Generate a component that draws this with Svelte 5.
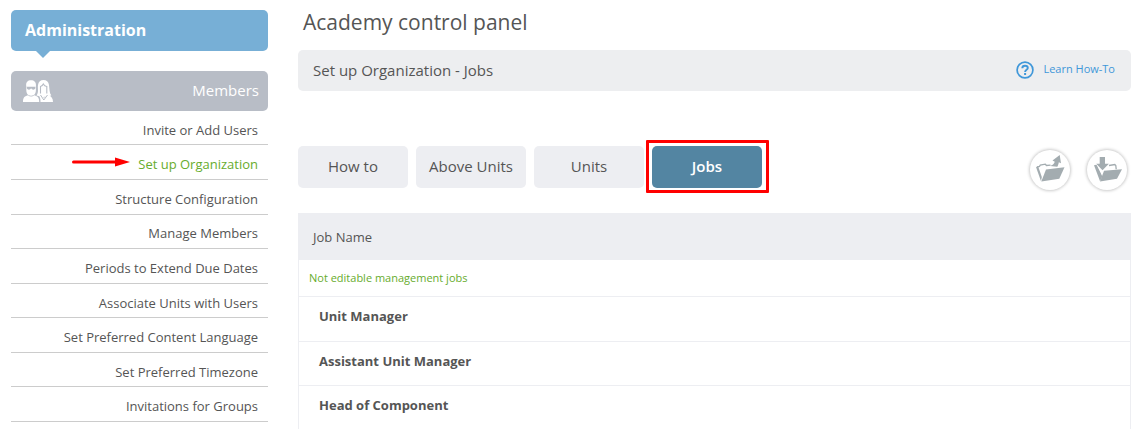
<script>
    const menuItems = [
        'Invite or Add Users',
        'Set up Organization',
        'Structure Configuration',
        'Manage Members',
        'Periods to Extend Due Dates',
        'Associate Units with Users',
        'Set Preferred Content Language',
        'Set Preferred Timezone',
        'Invitations for Groups',
    ];
    const tabs = ['How to', 'Above Units', 'Units', 'Jobs'];
    const jobs = ['Unit Manager', 'Assistant Unit Manager', 'Head of Component'];

    let activeItem = $state('Set up Organization');
    let activeTab = $state('Jobs');
</script>

<div class="page">
    <aside>
        <div class="admin">Administration</div>
        <div class="members">
            <svg width="32" height="24" viewBox="0 0 32 24" fill="#fff">
                <path d="M4.300 7.500C3.500 3 6 1.300 9 1.300S14.500 3 13.900 7.500V11c0 3.500-1.500 5.700-4.800 5.700S4.300 14.500 4.300 11z" />
                <path d="M1 23c0-4 1-5.500 5-6.700 1.700 1.700 4.500 1.700 6.200 0 4 1.200 5 2.700 5 6.700z" />
                <path d="M4.800 7.800h8.600v1.500c-.7 1.700-3.300 1.900-4.300 0-1 1.900-3.600 1.700-4.300 0z" fill="#b8bdc6" />
                <path d="M14.500 16.500c2.500-3 1-7 1.500-10.500C16.500 2.700 18.500 1 21.500 1s5 1.700 5.500 5c.5 3.800.2 7.500 2.300 10.500l-2.500.5-5.300 1-5-1z" />
                <path d="M18.500 14.500V7.500c1.500-.5 2.300-1.200 2.800-2.500.8 1.500 2 2.300 3.500 2.500v7" fill="none" stroke="#b8bdc6" stroke-width="1.100" />
                <path d="M17 16.500l2.500-1 2.500 3.500 3-3.500c4 1 6 3.500 6 7.500H18.500c0-3-.3-4.500-1.500-6.500z" />
                <path d="M18.500 16l3.300 5 3.700-5" fill="none" stroke="#b8bdc6" />
            </svg>
            <span>Members</span>
        </div>
        <nav>
            {#each menuItems as item}
                <button class="item" class:active={item === activeItem} onclick={() => (activeItem = item)}>
                    {#if item === activeItem}
                        <svg class="arrow" width="60" height="10" viewBox="0 0 60 10">
                            <path d="M2.500 5H46" stroke="#f00" stroke-width="3" stroke-linecap="round" />
                            <path d="M44 .5L59 5 44 9.500z" fill="#f00" />
                        </svg>
                    {/if}
                    <span>{item}</span>
                </button>
            {/each}
        </nav>
    </aside>

    <main>
        <h1>Academy control panel</h1>
        <div class="bar">
            <span>Set up Organization - Jobs</span>
            <a href="#help">
                <svg width="18" height="18" viewBox="0 0 18 18" fill="none" stroke="#3f97d9">
                    <circle cx="9" cy="9" r="7.900" stroke-width="1.700" />
                    <path d="M6.300 7.300C6.300 5.500 7.400 4.800 9 4.800s2.800.9 2.800 2.200c0 1.700-2.700 1.900-2.700 3.900" stroke-width="1.900" />
                    <path d="M9.100 12v2" stroke-width="2" />
                </svg>
                <span>Learn How-To</span>
            </a>
        </div>

        <div class="toolbar">
            <div class="tabs">
                {#each tabs as tab}
                    <button class="tab" class:selected={tab === activeTab} onclick={() => (activeTab = tab)}>{tab}</button>
                {/each}
            </div>
            <div class="actions">
                <button class="round" aria-label="Export">
                    <svg width="40" height="40" viewBox="0 0 40 40" fill="#a3acb0">
                        <path d="M16 19.500L34.500 17.300 29.300 28.700 11.300 31.500z" />
                        <path d="M6 17l2.200-.4 3.600 10.400L11 31.300z" />
                        <path d="M7 17l2.500-.6.800-1.400 5-.8 1.200 1.300 4-.4" fill="none" stroke="#a3acb0" stroke-width="1.300" />
                        <path d="M20 16c2.500-.8 4-2 4.800-4.200L22.500 10.500 29.700 5l1.300 8.300-2.200-1c-.2 1.800-.7 3-1.500 4.500z" />
                    </svg>
                </button>
                <button class="round" aria-label="Import">
                    <svg width="40" height="40" viewBox="0 0 40 40" fill="#a3acb0">
                        <path d="M17 20.700l18-1.500-5 9.600-17 2.700z" />
                        <path d="M7 15.200l2.200-.5 6.200 11.800L13 31.300z" />
                        <path d="M9.200 15.200l4.300 9" fill="none" stroke="#a3acb0" />
                        <path d="M22 15.500l5.800-1 1 1 .4 3.800" fill="none" stroke="#a3acb0" stroke-width="1.300" />
                        <path d="M12.700 7H18v6.700h3.900l-6.400 6.600-6.300-6.600h3.500z" />
                    </svg>
                </button>
            </div>
        </div>

        <div class="table">
            <div class="head">Job Name</div>
            <div class="note">Not editable management jobs</div>
            {#each jobs as job}
                <div class="row">{job}</div>
            {/each}
        </div>
    </main>
</div>

<style>
    :global(body) {
        background: #fff;
        overflow: hidden;
    }

    .page {
        display: flex;
        gap: 30px;
        box-sizing: border-box;
        height: 429px;
        padding: 10px 13px 0 11px;
        overflow: hidden;
        font-family: "Open Sans", sans-serif;
        color: #555;
    }

    button {
        padding: 0;
        border: none;
        background: none;
        font-family: inherit;
        color: inherit;
        cursor: pointer;
    }

    aside {
        width: 257px;
        flex: none;
    }

    .admin {
        position: relative;
        height: 41px;
        padding-left: 14px;
        border-radius: 5px;
        background: #77afd6;
        color: #fff;
        font-size: 16px;
        font-weight: 700;
        line-height: 40px;
    }

    /* pointer under the heading */
    .admin::after {
        content: '';
        position: absolute;
        left: 25px;
        top: 41px;
        border: 7px solid transparent;
        border-top-color: #77afd6;
        border-bottom: 0;
    }

    .members {
        display: flex;
        align-items: center;
        justify-content: space-between;
        box-sizing: border-box;
        height: 40px;
        margin-top: 20px;
        padding: 0 9px 0 11px;
        border-radius: 5px;
        background: #b8bdc6;
        color: #fff;
        font-size: 15px;
    }

    .members span {
        padding-bottom: 2px;
    }

    nav {
        display: flex;
        flex-direction: column;
        margin-top: -0.1px;
    }

    .item {
        display: flex;
        align-items: center;
        justify-content: flex-end;
        gap: 7px;
        box-sizing: border-box;
        height: 34.56px;
        padding: 4.2px 10px 0 0;
        border-bottom: 1px solid #ccc;
        font-size: 13px;
        line-height: 18px;
    }

    .item.active {
        color: #67ac2d;
    }

    .arrow {
        margin-top: -5px;
    }

    main {
        flex: 1;
        min-width: 0;
    }

    h1 {
        height: 40px;
        margin: 0 0 0 5px;
        font-size: 21px;
        font-weight: 400;
        line-height: 25px;
    }

    .bar {
        display: flex;
        align-items: center;
        justify-content: space-between;
        box-sizing: border-box;
        height: 41px;
        padding: 0 16px 1px 15px;
        border-radius: 5px;
        background: #edeef0;
        font-size: 15px;
    }

    .bar a {
        display: flex;
        gap: 9px;
        color: #3f97d9;
        font-size: 11px;
        line-height: 16px;
        text-decoration: none;
    }

    .toolbar {
        display: flex;
        justify-content: space-between;
        margin-top: 55px;
    }

    .tabs {
        display: flex;
        gap: 8px;
    }

    .tab {
        width: 110px;
        height: 42px;
        padding-bottom: 2px;
        border-radius: 5px;
        background: #edeef2;
        font-size: 15px;
    }

    .tab.selected {
        position: relative;
        background: #5385a2;
        color: #fff;
        font-weight: 600;
    }

    /* highlight frame around the selected tab */
    .tab.selected::after {
        content: '';
        position: absolute;
        inset: -6px -7px -5px -6px;
        border: 3px solid #f00;
        border-radius: 1px;
    }

    .actions {
        display: flex;
        gap: 17px;
        padding: 4px 4px 0 0;
    }

    .round {
        width: 40px;
        height: 40px;
        border-radius: 50%;
        background: #fff;
        box-shadow: 0 0 3px 1px #ccc;
    }

    .round svg {
        display: block;
    }

    .table {
        box-sizing: border-box;
        height: 260px;
        margin-top: 23px;
        border: 1px solid #edeef2;
        border-top: 0;
    }

    .head {
        height: 47px;
        padding-left: 14px;
        background: #edeef2;
        font-size: 13px;
        line-height: 49px;
    }

    .note {
        height: 36px;
        padding-left: 10px;
        border-bottom: 1px solid #edeef2;
        color: #67ac2d;
        font-size: 11px;
        line-height: 36px;
    }

    .row {
        height: 43.5px;
        padding-left: 20px;
        border-bottom: 1px solid #edeef2;
        font-size: 13px;
        font-weight: 700;
        line-height: 39px;
    }
</style>
